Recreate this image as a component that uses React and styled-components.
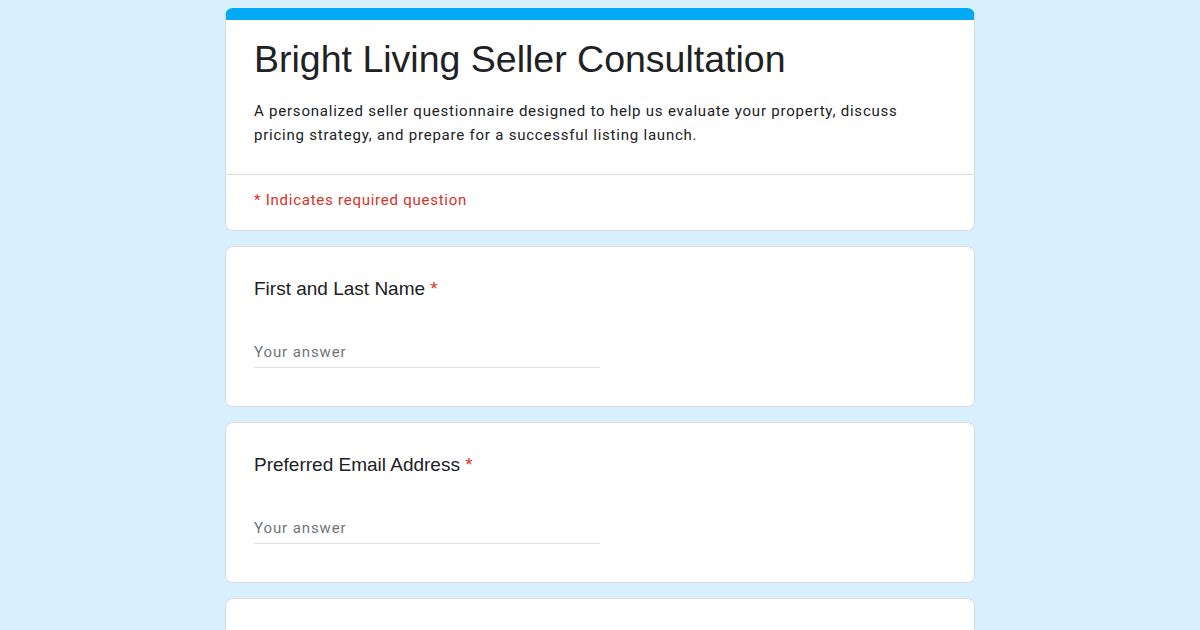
import React from 'react';
import styled, { createGlobalStyle } from 'styled-components';

const GlobalStyle = createGlobalStyle`
  html, body {
    margin: 0;
    padding: 0;
    background: #d9f0fc;
  }
  body {
    font-family: Roboto, "Liberation Sans", Arial, sans-serif;
    color: #202124;
  }
`;

const questions = [
  { id: 'name', title: 'First and Last Name', required: true },
  { id: 'email', title: 'Preferred Email Address', required: true },
  { id: 'phone', title: 'Best Phone Number', required: true },
];

const App = () => (
  <>
    <GlobalStyle />
    <Page>
      <Form>
        <HeaderCard>
          <HeaderTop>
            <FormTitle>Bright Living Seller Consultation</FormTitle>
            <Description>
              A personalized seller questionnaire designed to help us evaluate your property, discuss
              pricing strategy, and prepare for a successful listing launch.
            </Description>
          </HeaderTop>
          <RequiredNote>* Indicates required question</RequiredNote>
        </HeaderCard>

        {questions.map(q => (
          <QuestionCard key={q.id}>
            <QuestionTitle>
              {q.title}
              {q.required && <Asterisk> *</Asterisk>}
            </QuestionTitle>
            <AnswerInput placeholder="Your answer" />
          </QuestionCard>
        ))}
      </Form>
    </Page>
  </>
);

const Page = styled.div`
  height: 100vh;
  overflow: hidden;
  padding-top: 8px;
  box-sizing: border-box;
`;

const Form = styled.div`
  width: 750px;
  margin: 0 auto;
  display: flex;
  flex-direction: column;
  gap: 15px;
`;

const Card = styled.div`
  background: #fff;
  border: 1px solid #dadce0;
  border-radius: 8px;
  box-sizing: border-box;
`;

const HeaderCard = styled(Card)`
  border-top: 12px solid #03a9f4;
`;

const HeaderTop = styled.div`
  padding: 16px 28px 27px;
  border-bottom: 1px solid #dadce0;
`;

const FormTitle = styled.h1`
  margin: 0;
  font-family: "Liberation Sans", Arial, sans-serif;
  font-weight: 400;
  font-size: 37.5px;
  line-height: 47px;
  color: #202124;
`;

const Description = styled.p`
  margin: 16px 0 0;
  font-size: 15px;
  line-height: 24px;
  letter-spacing: 0.78px;
  color: #202124;
`;

const RequiredNote = styled.div`
  padding: 14px 28px 19px;
  font-size: 15px;
  line-height: 22px;
  letter-spacing: 0.75px;
  color: #d93025;
`;

const QuestionCard = styled(Card)`
  padding: 30px 28px 38px;
  display: flex;
  flex-direction: column;
`;

const QuestionTitle = styled.div`
  font-family: "Liberation Sans", Arial, sans-serif;
  font-size: 19px;
  line-height: 24px;
  color: #202124;
`;

const Asterisk = styled.span`
  color: #d93025;
`;

const AnswerInput = styled.input`
  margin-top: 40px;
  width: 346px;
  border: none;
  border-bottom: 1px solid #e0e0e0;
  padding: 0 0 4px;
  font-family: Roboto, "Liberation Sans", Arial, sans-serif;
  font-size: 15px;
  line-height: 22px;
  letter-spacing: 0.9px;
  color: #202124;
  background: transparent;
  outline: none;

  &::placeholder {
    color: #70757a;
  }
`;

export default App;
